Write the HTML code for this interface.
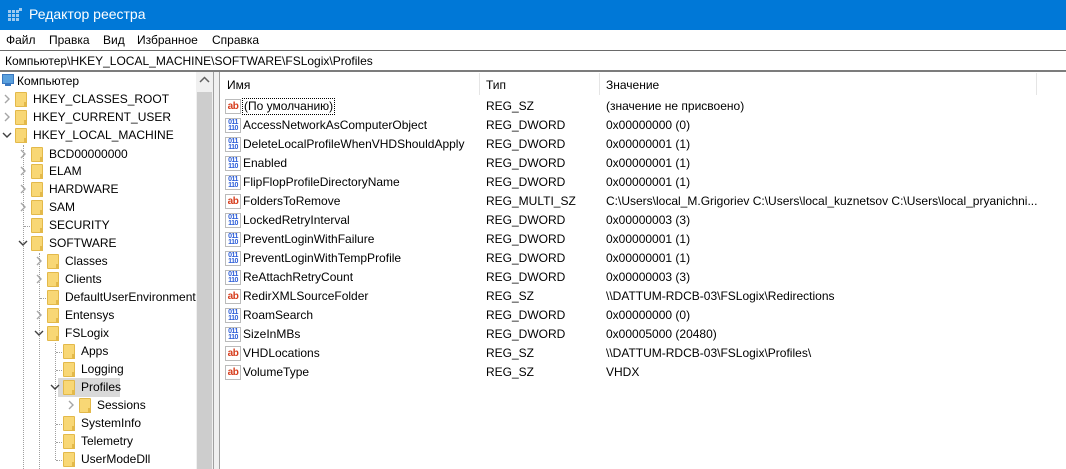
<!DOCTYPE html>
<html><head><meta charset="utf-8"><style>
*{margin:0;padding:0;box-sizing:border-box}
body{width:1066px;height:469px;overflow:hidden;background:#fff;font-family:"Liberation Sans","DejaVu Sans",sans-serif;font-size:12px;color:#000;position:relative}
.a{position:absolute;white-space:nowrap}
.t{line-height:18px;height:18px}
.f{position:absolute;width:12px;height:15px;background:#f8d775;border:1px solid #e3b94a;border-radius:1px}
.f:after{content:"";position:absolute;right:-1px;bottom:-1px;width:3px;height:5px;background:#e3b94a}
.ch{position:absolute;width:10px;height:18px}
.r{position:absolute;left:0;height:19px;line-height:19px;width:846px}
.r span{position:absolute}
.ic{position:absolute;left:5px;top:2px;width:16px;height:15px;font-size:10px;font-weight:bold;line-height:13px;border:1px solid #bbb;background:#fff;text-align:center;letter-spacing:-0.5px}
.ab{color:#d63c1c}
.bin{color:#2a5bd7;font-size:7px;line-height:6px;padding-top:1px}
.dv{position:absolute;width:0;border-left:1px dotted #a0a0a0}
.dh{position:absolute;height:0;border-top:1px dotted #a0a0a0;width:6px}
</style></head><body>
<svg width="0" height="0" style="position:absolute"><defs>
<symbol id="r" viewBox="0 0 10 18"><path d="M3 5 L7 9 L3 13" fill="none" stroke="#a6a6a6" stroke-width="1.4"/></symbol>
<symbol id="d" viewBox="0 0 10 18"><path d="M1 7 L5 11 L9 7" fill="none" stroke="#404040" stroke-width="1.4"/></symbol>
</defs></svg>
<div class="a" style="left:0;top:0;width:1066px;height:30px;background:#0078d7"></div>
<div class="a" style="left:8px;top:8px;width:14px;height:14px">
<svg width="14" height="14"><g fill="#9dc9ef"><rect x="0" y="2" width="3" height="3"/><rect x="4" y="2" width="3" height="3"/><rect x="8" y="2" width="3" height="3"/><rect x="0" y="6" width="3" height="3"/><rect x="4" y="6" width="3" height="3"/><rect x="8" y="6" width="3" height="3"/><rect x="0" y="10" width="3" height="3"/><rect x="4" y="10" width="3" height="3"/><rect x="8" y="10" width="3" height="3"/><rect x="11" y="0" width="3" height="3"/></g></svg></div>
<div class="a" style="left:29px;top:6px;color:#fff;font-size:14px">Редактор реестра</div>
<div class="a" style="left:6px;top:33px">Файл</div>
<div class="a" style="left:49px;top:33px">Правка</div>
<div class="a" style="left:103px;top:33px">Вид</div>
<div class="a" style="left:137px;top:33px">Избранное</div>
<div class="a" style="left:212px;top:33px">Справка</div>
<div class="a" style="left:0;top:50px;width:1066px;height:1px;background:#6a6a6a"></div>
<div class="a" style="left:5px;top:54px">Компьютер\HKEY_LOCAL_MACHINE\SOFTWARE\FSLogix\Profiles</div>
<div class="a" style="left:0;top:70px;width:1066px;height:2px;background:#7c7c7c"></div>
<!-- scrollbar & splitter -->
<div class="a" style="left:196px;top:72px;width:17px;height:397px;background:#f0f0f0"></div>
<div class="a" style="left:197px;top:92px;width:15px;height:377px;background:#cdcdcd"></div>
<svg class="a" style="left:199px;top:76px" width="11" height="8"><path d="M1 6 L5.5 1.5 L10 6" fill="none" stroke="#606060" stroke-width="1.5"/></svg>
<div class="a" style="left:213px;top:72px;width:1px;height:397px;background:#a0a0a0"></div>
<div class="a" style="left:214px;top:72px;width:5px;height:397px;background:#f0f0f0"></div>
<div class="a" style="left:219px;top:72px;width:1px;height:397px;background:#a0a0a0"></div>
<!-- dotted tree lines -->
<div class="dv" style="left:23px;top:145px;height:324px"></div>
<div class="dv" style="left:39px;top:253px;height:216px"></div>
<div class="dv" style="left:55px;top:343px;height:117px"></div>
<div class="dh" style="left:24px;top:226px"></div>
<div class="dh" style="left:40px;top:298px"></div>
<div class="dh" style="left:56px;top:352px"></div>
<div class="dh" style="left:56px;top:370px"></div>
<div class="dh" style="left:56px;top:424px"></div>
<div class="dh" style="left:56px;top:442px"></div>
<div class="dh" style="left:56px;top:460px"></div>
<!-- tree -->
<div class="a" style="left:2px;top:74px;width:12px;height:10px;background:#5aa0dd;border:1px solid #3a78c0"></div>
<div class="a" style="left:5px;top:84px;width:6px;height:2px;background:#3a78c0"></div>
<div class="a t" style="left:17px;top:72px">Компьютер</div>

<svg class="ch" style="left:2px;top:90px"><use href="#r"/></svg><div class="f" style="left:15px;top:92px"></div><div class="a t" style="left:33px;top:90px">HKEY_CLASSES_ROOT</div>
<svg class="ch" style="left:2px;top:108px"><use href="#r"/></svg><div class="f" style="left:15px;top:110px"></div><div class="a t" style="left:33px;top:108px">HKEY_CURRENT_USER</div>
<svg class="ch" style="left:2px;top:126px"><use href="#d"/></svg><div class="f" style="left:15px;top:128px"></div><div class="a t" style="left:33px;top:126px">HKEY_LOCAL_MACHINE</div>

<svg class="ch" style="left:18px;top:145px"><use href="#r"/></svg><div class="f" style="left:31px;top:147px"></div><div class="a t" style="left:49px;top:145px">BCD00000000</div>
<svg class="ch" style="left:18px;top:162px"><use href="#r"/></svg><div class="f" style="left:31px;top:164px"></div><div class="a t" style="left:49px;top:162px">ELAM</div>
<svg class="ch" style="left:18px;top:180px"><use href="#r"/></svg><div class="f" style="left:31px;top:182px"></div><div class="a t" style="left:49px;top:180px">HARDWARE</div>
<svg class="ch" style="left:18px;top:198px"><use href="#r"/></svg><div class="f" style="left:31px;top:200px"></div><div class="a t" style="left:49px;top:198px">SAM</div>
<div class="f" style="left:31px;top:218px"></div><div class="a t" style="left:49px;top:216px">SECURITY</div>
<svg class="ch" style="left:18px;top:234px"><use href="#d"/></svg><div class="f" style="left:31px;top:236px"></div><div class="a t" style="left:49px;top:234px">SOFTWARE</div>

<svg class="ch" style="left:34px;top:252px"><use href="#r"/></svg><div class="f" style="left:47px;top:254px"></div><div class="a t" style="left:65px;top:252px">Classes</div>
<svg class="ch" style="left:34px;top:270px"><use href="#r"/></svg><div class="f" style="left:47px;top:272px"></div><div class="a t" style="left:65px;top:270px">Clients</div>
<div class="f" style="left:47px;top:290px"></div><div class="a t" style="left:65px;top:288px">DefaultUserEnvironment</div>
<svg class="ch" style="left:34px;top:306px"><use href="#r"/></svg><div class="f" style="left:47px;top:308px"></div><div class="a t" style="left:65px;top:306px">Entensys</div>
<svg class="ch" style="left:34px;top:324px"><use href="#d"/></svg><div class="f" style="left:47px;top:326px"></div><div class="a t" style="left:65px;top:324px">FSLogix</div>

<div class="f" style="left:63px;top:344px"></div><div class="a t" style="left:81px;top:342px">Apps</div>
<div class="f" style="left:63px;top:362px"></div><div class="a t" style="left:81px;top:360px">Logging</div>
<div class="a" style="left:58px;top:378px;width:62px;height:19px;background:#d9d9d9"></div>
<svg class="ch" style="left:50px;top:378px"><use href="#d"/></svg><div class="f" style="left:63px;top:380px"></div><div class="a t" style="left:81px;top:378px">Profiles</div>
<svg class="ch" style="left:66px;top:396px"><use href="#r"/></svg><div class="f" style="left:79px;top:398px"></div><div class="a t" style="left:97px;top:396px">Sessions</div>
<div class="f" style="left:63px;top:416px"></div><div class="a t" style="left:81px;top:414px">SystemInfo</div>
<div class="f" style="left:63px;top:434px"></div><div class="a t" style="left:81px;top:432px">Telemetry</div>
<div class="f" style="left:63px;top:452px"></div><div class="a t" style="left:81px;top:450px">UserModeDll</div>

<!-- list -->
<div class="a" style="left:227px;top:78px">Имя</div>
<div class="a" style="left:486px;top:78px">Тип</div>
<div class="a" style="left:606px;top:78px">Значение</div>
<div class="a" style="left:479px;top:73px;width:1px;height:22px;background:#e5e5e5"></div>
<div class="a" style="left:599px;top:73px;width:1px;height:22px;background:#e5e5e5"></div>
<div class="a" style="left:1036px;top:73px;width:1px;height:22px;background:#e5e5e5"></div>

<div class="a" style="left:220px;top:97px;width:846px;height:300px">
<div class="r" style="top:0"><div class="ic ab">ab</div><span style="left:22px;top:1px;height:17px;line-height:15px;border:1px dotted #000;padding:0 1px">(По умолчанию)</span><span style="left:266px">REG_SZ</span><span style="left:386px">(значение не присвоено)</span></div>
<div class="r" style="top:19px"><div class="ic bin">011<br>110</div><span style="left:23px">AccessNetworkAsComputerObject</span><span style="left:266px">REG_DWORD</span><span style="left:386px">0x00000000 (0)</span></div>
<div class="r" style="top:38px"><div class="ic bin">011<br>110</div><span style="left:23px">DeleteLocalProfileWhenVHDShouldApply</span><span style="left:266px">REG_DWORD</span><span style="left:386px">0x00000001 (1)</span></div>
<div class="r" style="top:57px"><div class="ic bin">011<br>110</div><span style="left:23px">Enabled</span><span style="left:266px">REG_DWORD</span><span style="left:386px">0x00000001 (1)</span></div>
<div class="r" style="top:76px"><div class="ic bin">011<br>110</div><span style="left:23px">FlipFlopProfileDirectoryName</span><span style="left:266px">REG_DWORD</span><span style="left:386px">0x00000001 (1)</span></div>
<div class="r" style="top:95px"><div class="ic ab">ab</div><span style="left:23px">FoldersToRemove</span><span style="left:266px">REG_MULTI_SZ</span><span style="left:386px">C:\Users\local_M.Grigoriev C:\Users\local_kuznetsov C:\Users\local_pryanichni...</span></div>
<div class="r" style="top:114px"><div class="ic bin">011<br>110</div><span style="left:23px">LockedRetryInterval</span><span style="left:266px">REG_DWORD</span><span style="left:386px">0x00000003 (3)</span></div>
<div class="r" style="top:133px"><div class="ic bin">011<br>110</div><span style="left:23px">PreventLoginWithFailure</span><span style="left:266px">REG_DWORD</span><span style="left:386px">0x00000001 (1)</span></div>
<div class="r" style="top:152px"><div class="ic bin">011<br>110</div><span style="left:23px">PreventLoginWithTempProfile</span><span style="left:266px">REG_DWORD</span><span style="left:386px">0x00000001 (1)</span></div>
<div class="r" style="top:171px"><div class="ic bin">011<br>110</div><span style="left:23px">ReAttachRetryCount</span><span style="left:266px">REG_DWORD</span><span style="left:386px">0x00000003 (3)</span></div>
<div class="r" style="top:190px"><div class="ic ab">ab</div><span style="left:23px">RedirXMLSourceFolder</span><span style="left:266px">REG_SZ</span><span style="left:386px">\\DATTUM-RDCB-03\FSLogix\Redirections</span></div>
<div class="r" style="top:209px"><div class="ic bin">011<br>110</div><span style="left:23px">RoamSearch</span><span style="left:266px">REG_DWORD</span><span style="left:386px">0x00000000 (0)</span></div>
<div class="r" style="top:228px"><div class="ic bin">011<br>110</div><span style="left:23px">SizeInMBs</span><span style="left:266px">REG_DWORD</span><span style="left:386px">0x00005000 (20480)</span></div>
<div class="r" style="top:247px"><div class="ic ab">ab</div><span style="left:23px">VHDLocations</span><span style="left:266px">REG_SZ</span><span style="left:386px">\\DATTUM-RDCB-03\FSLogix\Profiles\</span></div>
<div class="r" style="top:266px"><div class="ic ab">ab</div><span style="left:23px">VolumeType</span><span style="left:266px">REG_SZ</span><span style="left:386px">VHDX</span></div>
</div>
</body></html>
